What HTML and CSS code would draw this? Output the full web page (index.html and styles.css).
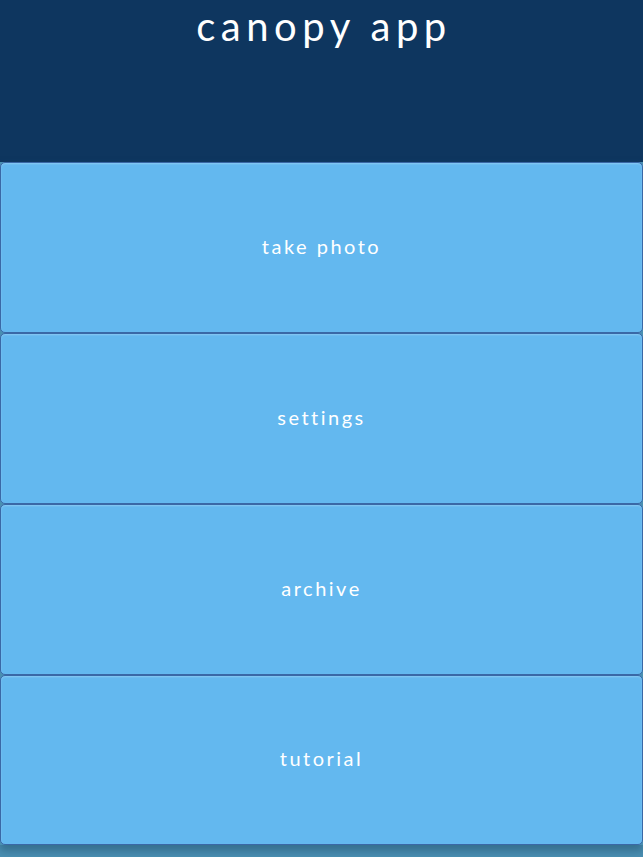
FILE: index.html
```html
<!DOCTYPE html>
<html lang="en">
<head>
    <meta charset="UTF-8">
    <meta name="viewport" content="width=device-width, initial-scale=1.0">
    <title>canopy app</title>
    <link rel="stylesheet" href="styles.css">
</head>
<body>
    <div class="header">
        <h1>canopy app</h1>
    </div>

    <div class="menu">
        <button class="menu-item">take photo</button>
        <button class="menu-item">settings</button>
        <button class="menu-item">archive</button>
        <button class="menu-item">tutorial</button>
    </div>
</body>
</html>
```

FILE: styles.css
```css
/* Reset */
* {
    margin: 0;
    padding: 0;
    box-sizing: border-box;
}

body {
    font-family: Lato, "Noto Sans", sans-serif;
    background-color: #4a8fb2;
    width: 643px;
    height: 857px;
    overflow: hidden;
}

.header {
    height: 162px;
    background-color: #0e365f;
    padding-top: 3px;
}

.header h1 {
    color: #ffffff;
    text-align: center;
    font-weight: 400;
    font-size: 40px;
    letter-spacing: 5.5px;
    line-height: 46px;
    padding-left: 5px;
}

.menu {
    display: flex;
    flex-direction: column;
    box-shadow: 0 6px 8px rgba(40, 90, 120, 0.6);
}

.menu-item {
    height: 171px;
    width: 100%;
    background-color: #63b8ef;
    border: 1px solid #3a68a6;
    border-radius: 5px;
    color: #ffffff;
    font-family: Lato, "Noto Sans", sans-serif;
    font-size: 20px;
    letter-spacing: 2.5px;
    padding-bottom: 4px;
    box-shadow: inset 0 1px 2px rgba(255, 255, 255, 0.25);
}

.menu-item:last-child {
    height: 170px;
}
```
